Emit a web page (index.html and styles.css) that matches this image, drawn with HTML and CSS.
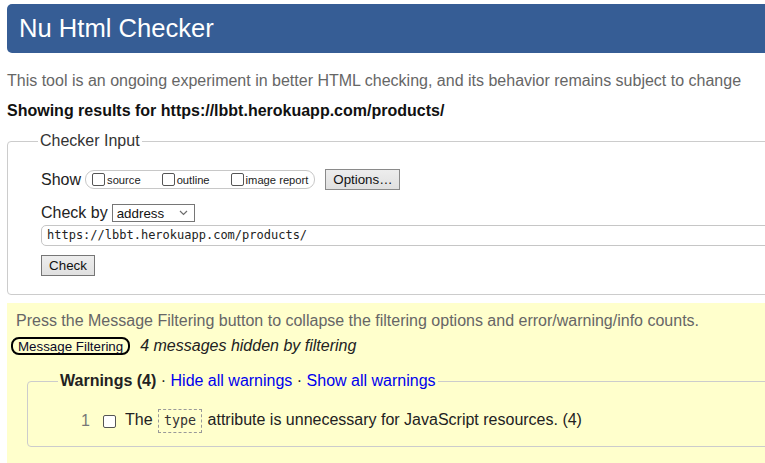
FILE: index.html
```html
<!DOCTYPE html>
<html lang="en">
<head>
<meta charset="utf-8">
<title>Nu Html Checker</title>
<link rel="stylesheet" href="styles.css">
</head>
<body>
<div class="page">
  <h1 class="title">Nu Html Checker</h1>
  <p class="intro">This tool is an ongoing experiment in better HTML checking, and its behavior remains subject to change</p>
  <p class="showing">Showing results for https://lbbt.herokuapp.com/products/</p>

  <fieldset class="checker">
    <legend class="checker-legend">Checker Input</legend>
    <div class="row row-show">
      <span class="row-label">Show</span>
      <span class="pill">
        <label class="opt"><input type="checkbox" class="box"><span>source</span></label>
        <label class="opt"><input type="checkbox" class="box"><span>outline</span></label>
        <label class="opt opt-last"><input type="checkbox" class="box"><span>image report</span></label>
      </span>
      <button class="btn btn-options" type="button">Options…</button>
    </div>
    <div class="row row-by">
      <span class="row-label">Check by</span>
      <span class="select">
        <span class="select-text">address</span>
        <svg class="chev" width="9" height="6" viewBox="0 0 9 6"><path d="M1 1 L4.5 4.5 L8 1" fill="none" stroke="#6d6d6d" stroke-width="1.2"/></svg>
      </span>
    </div>
    <div class="url">https://lbbt.herokuapp.com/products/</div>
    <div class="row row-check">
      <button class="btn btn-check" type="button">Check</button>
    </div>
  </fieldset>

  <section class="results">
    <p class="press">Press the Message Filtering button to collapse the filtering options and error/warning/info counts.</p>
    <div class="filter-row">
      <button class="btn-filter" type="button">Message Filtering</button>
      <em class="hidden-note">4 messages hidden by filtering</em>
    </div>
    <fieldset class="warnings">
      <legend class="warn-legend"><strong>Warnings (4)</strong> · <a class="lnk">Hide all warnings</a> · <a class="lnk">Show all warnings</a></legend>
      <div class="msg">
        <span class="num">1</span>
        <input type="checkbox" class="box box-msg">
        <span class="msg-text">The <code class="code">type</code> attribute is unnecessary for JavaScript resources. (4)</span>
      </div>
    </fieldset>
  </section>
</div>
</body>
</html>
```

FILE: styles.css
```css
html, body {
  margin: 0;
  overflow: hidden;
}
body {
  font-family: "Liberation Sans", Arial, sans-serif;
  font-size: 16px;
  color: #222;
  background: #fff;
}
.page {
  width: 1000px;
  padding: 4px 0 0 7px;
}
.title {
  margin: 0;
  height: 49px;
  line-height: 49px;
  padding-left: 12px;
  background: #365d95;
  color: #fff;
  font-size: 25.6px;
  font-weight: normal;
  border-radius: 5px;
}
.intro {
  margin: 19px 0 0;
  line-height: 18px;
  color: #666;
}
.showing {
  margin: 12px 0 0;
  line-height: 18px;
  font-weight: bold;
  color: #111;
}
.checker {
  margin: 12px 0 0;
  padding: 0 0 18px 33px;
  width: 900px;
  border: 1px solid #ccc;
  border-radius: 4px;
  box-sizing: border-box;
}
.checker-legend {
  padding: 0 2px;
  margin-left: -3px;
  line-height: 18px;
  color: #333;
}
.row {
  display: flex;
  align-items: center;
}
.row-show {
  margin-top: 19px;
  height: 21px;
}
.row-label {
  margin-right: 4px;
}
.pill {
  display: inline-flex;
  align-items: center;
  height: 19px;
  box-sizing: border-box;
  border: 1px solid #c8c8c8;
  border-radius: 9px;
  padding: 0 6px;
}
.opt {
  display: inline-flex;
  align-items: center;
  font-size: 11.2px;
  margin-right: 21px;
  color: #222;
}
.opt-last {
  margin-right: 0;
}
.box {
  appearance: none;
  -webkit-appearance: none;
  width: 13px;
  height: 13px;
  margin: 0 2px 0 0;
  border: 1px solid #555;
  border-radius: 2px;
  background: #fff;
  box-sizing: border-box;
}
.btn {
  font-family: "Liberation Sans", Arial, sans-serif;
  font-size: 13.33px;
  color: #111;
  height: 21px;
  padding: 0;
  box-sizing: border-box;
  border: 1px solid #8a8a8a;
  background: linear-gradient(#ededed, #e0e0e0);
  border-radius: 0;
}
.btn-options {
  margin-left: 10px;
  width: 75px;
}
.row-by {
  margin-top: 14px;
  height: 18px;
}
.select {
  display: inline-flex;
  align-items: center;
  justify-content: space-between;
  width: 83px;
  height: 18px;
  box-sizing: border-box;
  border: 1px solid #767676;
  padding: 0 6px 0 4px;
  font-size: 13.33px;
  color: #111;
  background: #fff;
}
.url {
  margin-top: 3px;
  width: 850px;
  height: 21px;
  line-height: 19px;
  box-sizing: border-box;
  border: 1px solid #c6c6c6;
  border-radius: 5px;
  padding-left: 5px;
  font-family: "DejaVu Sans Mono", "Liberation Mono", monospace;
  font-size: 12px;
  color: #222;
}
.row-check {
  margin-top: 9px;
}
.btn-check {
  width: 54px;
  border-color: #767676;
}
.results {
  margin-top: 8px;
  background: #ffffcc;
  padding: 9px 0 17px 4px;
}
.press {
  margin: 0 0 0 5px;
  line-height: 18px;
  color: #666;
}
.filter-row {
  display: flex;
  align-items: center;
  margin-top: 7px;
  height: 18px;
}
.btn-filter {
  height: 18px;
  box-sizing: border-box;
  border: 2px solid #000;
  border-radius: 8px;
  padding: 0 5px;
  background: transparent;
  font-family: "Liberation Sans", Arial, sans-serif;
  font-size: 13.33px;
  color: #0a0a2a;
}
.hidden-note {
  margin-left: 10px;
  color: #222;
}
.warnings {
  margin: 17px 0 0 16px;
  padding: 0 0 13px 33px;
  width: 900px;
  border: 1px solid #ccc;
  border-radius: 4px;
  box-sizing: border-box;
}
.warn-legend {
  padding: 0 2px;
  margin-left: -3px;
  line-height: 18px;
  color: #222;
}
.lnk {
  color: #0000ee;
}
.msg {
  display: flex;
  align-items: center;
  margin: 19px 0 0 20px;
  height: 24px;
}
.num {
  color: #777;
  width: 22px;
}
.box-msg {
  margin-right: 9px;
}
.code {
  display: inline-block;
  border: 1px dashed #999;
  padding: 3px 5px;
  margin: 0 1px;
  font-family: "DejaVu Sans Mono", "Liberation Mono", monospace;
  font-size: 13.33px;
  line-height: 16px;
  color: #333;
}
```
